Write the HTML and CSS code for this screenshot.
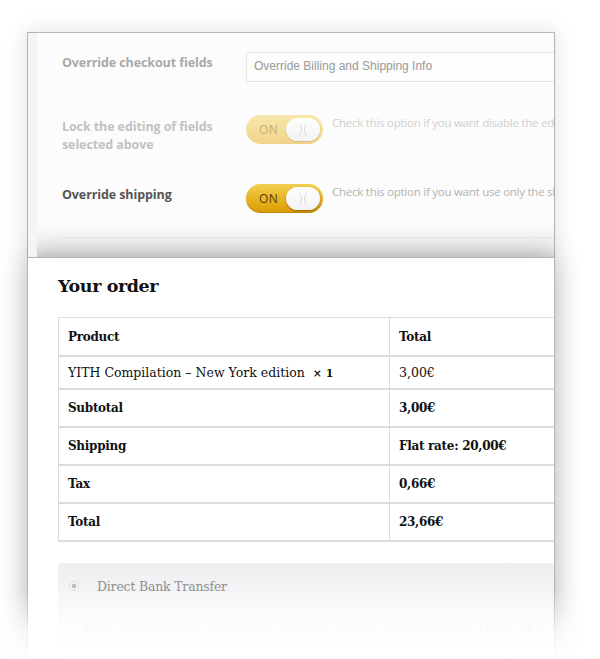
FILE: index.html
```html
<!DOCTYPE html>
<html>
<head>
<meta charset="utf-8">
<link rel="stylesheet" href="styles.css">
</head>
<body>
<div class="stage">
  <div class="admin">
    <div class="sidebar"></div>
    <div class="admin-body">
      <div class="row row-fields">
        <div class="label">Override checkout fields</div>
        <div class="field"><div class="input">Override Billing and Shipping Info</div></div>
      </div>
      <div class="row row-lock">
        <div class="label">Lock the editing of fields selected above</div>
        <div class="field">
          <div class="toggle faded"><span class="on">ON</span><span class="knob"></span></div>
          <div class="desc">Check this option if you want disable the editing of the fields</div>
        </div>
      </div>
      <div class="row row-ship">
        <div class="label">Override shipping</div>
        <div class="field">
          <div class="toggle"><span class="on">ON</span><span class="knob"></span></div>
          <div class="desc">Check this option if you want use only the shipping address</div>
        </div>
      </div>
      <div class="sep"></div>
    </div>
  </div>
  <div class="order">
    <h2 class="title">Your order</h2>
    <table class="tbl">
      <tr class="r-head"><th class="c1">Product</th><th>Total</th></tr>
      <tr class="r-item"><td class="c1">YITH Compilation – New York edition&nbsp; <b>× 1</b></td><td>3,00€</td></tr>
      <tr><th class="c1">Subtotal</th><th>3,00€</th></tr>
      <tr><th class="c1">Shipping</th><th>Flat rate: 20,00€</th></tr>
      <tr><th class="c1">Tax</th><th>0,66€</th></tr>
      <tr><th class="c1">Total</th><th>23,66€</th></tr>
    </table>
    <div class="pay">
      <div class="method"><span class="radio"></span><span class="mname">Direct Bank Transfer</span></div>
      <div class="pdesc">Make your payment directly into our bank account. Please use your Order ID as the payment reference.</div>
    </div>
  </div>
  <div class="fade"></div>
</div>
</body>
</html>
```

FILE: styles.css
```css
html, body {
  margin: 0;
  padding: 0;
  background: #fff;
}
.stage {
  position: relative;
  width: 600px;
  height: 659px;
  overflow: hidden;
  background: #fff;
  padding-top: 32px;
  box-sizing: border-box;
}
.admin {
  margin-left: 27px;
  width: 528px;
  height: 225px;
  box-sizing: border-box;
  border: 1px solid #b4b4b4;
  border-bottom: none;
  display: flex;
  overflow: hidden;
  background: linear-gradient(#fcfcfc 0, #fcfcfc 188px, #f0f0f0 215px, #e6e6e6 225px);
  box-shadow: 0 0 22px rgba(0,0,0,0.13);
}
.sidebar {
  width: 9px;
  flex: none;
  background: #f4f4f4;
}
.admin-body {
  flex: 1;
  padding-left: 25px;
  font-family: "Open Sans", "DejaVu Sans", sans-serif;
}
.row {
  display: grid;
  grid-template-columns: 184px 1fr;
}
.label {
  font-size: 12.5px;
  font-weight: 700;
  line-height: 18px;
  color: #a9a9a9;
  letter-spacing: -0.1px;
}
.row-fields {
  margin-top: 19px;
  height: 30px;
  align-items: start;
}
.row-fields .label { padding-top: 2px; }
.input {
  height: 30px;
  width: 340px;
  box-sizing: border-box;
  border: 1px solid #e6e6e6;
  border-radius: 2px;
  background: #fdfdfd;
  font-family: "Liberation Sans", Arial, sans-serif;
  font-size: 12px;
  color: #9a9a9a;
  line-height: 27px;
  padding-left: 7px;
  white-space: nowrap;
}
.row-lock {
  margin-top: 33px;
}
.row-lock .label {
  color: #c2c2c2;
  width: 160px;
  padding-top: 3px;
}
.field {
  display: flex;
  align-items: flex-start;
  white-space: nowrap;
}
.toggle {
  position: relative;
  flex: none;
  width: 77px;
  height: 29px;
  border-radius: 15px;
  background: linear-gradient(#f3cf4e, #e0a50f 80%, #d89a08);
  box-shadow: inset 0 -1px 1px rgba(120,70,0,0.25);
  display: flex;
  align-items: center;
}
.toggle.faded {
  background: linear-gradient(#f8e7ab, #f1d48a);
  box-shadow: none;
}
.on {
  font-size: 12px;
  color: #5a3c00;
  margin-left: 13px;
  letter-spacing: 0.5px;
}
.toggle.faded .on { color: #c8ac70; }
.knob {
  position: absolute;
  right: 3px;
  top: 3px;
  width: 34px;
  height: 23px;
  border-radius: 12px;
  background: linear-gradient(#ffffff, #f2f2f2);
  box-shadow: 0 1px 2px rgba(0,0,0,0.35);
  overflow: hidden;
}
.toggle.faded .knob { box-shadow: 0 1px 2px rgba(0,0,0,0.12); }
.knob::before, .knob::after {
  content: "";
  position: absolute;
  top: 3px;
  width: 12px;
  height: 16px;
  border-radius: 50%;
  border: 1px solid transparent;
}
.knob::before { left: 2px; border-right-color: #dcdcdc; }
.knob::after { right: 2px; border-left-color: #dcdcdc; }
.desc {
  margin-left: 9px;
  font-size: 11.5px;
  letter-spacing: -0.25px;
  color: #cfcfcf;
  line-height: 14px;
  margin-top: 1px;
}
.row-ship {
  margin-top: 30px;
  align-items: start;
}
.row-ship .label {
  color: #555;
  padding-top: 2px;
}
.row-ship .desc { color: #b3b3b3; }
.sep {
  margin-top: 24px;
  height: 1px;
  background: #e4e4e4;
  margin-left: -1px;
}
.order {
  margin-left: 27px;
  width: 528px;
  height: 420px;
  box-sizing: border-box;
  border: 1px solid #b4b4b4;
  border-bottom: none;
  background: #fff;
  overflow: hidden;
  padding-left: 30px;
  box-shadow: 0 0 26px rgba(0,0,0,0.32);
  font-family: "DejaVu Serif", "Liberation Serif", serif;
  color: #111;
}
.title {
  margin: 16px 0 0 0;
  font-size: 17.5px;
  font-weight: 700;
  line-height: 24px;
  letter-spacing: -0.4px;
}
.tbl {
  margin-top: 19px;
  width: 540px;
  border-collapse: collapse;
  font-size: 12.5px;
}
.tbl th, .tbl td {
  border: 1px solid #dcdcdc;
  border-bottom-width: 2px;
  height: 36px;
  padding: 0 9px;
  text-align: left;
  white-space: nowrap;
}
.tbl .r-head th { border-top-width: 1px; height: 37px; }
.tbl .r-item td { height: 31px; }
.tbl th { font-weight: 700; font-size: 12px; letter-spacing: -0.3px; }
.tbl td { font-weight: 400; }
.tbl .c1 { width: 312px; }
.tbl b { font-weight: 700; font-size: 11px; }
.pay {
  margin-top: 21px;
  height: 120px;
  background: linear-gradient(#efeef1, #f7f7f8 40%, #fff 90%);
  border-radius: 2px;
  padding-top: 13px;
  box-sizing: border-box;
}
.method {
  display: flex;
  align-items: center;
  height: 20px;
}
.radio {
  width: 8px;
  height: 8px;
  border-radius: 50%;
  border: 1px solid #e0e0e0;
  background: radial-gradient(circle, #bdbdbd 0, #bdbdbd 2px, #f4f4f4 2.5px);
  margin-left: 11px;
}
.mname {
  margin-left: 18px;
  font-size: 12.5px;
  letter-spacing: -0.2px;
  color: #8f8f8f;
}
.pdesc {
  margin-top: 26px;
  margin-left: 25px;
  font-size: 12px;
  letter-spacing: -0.3px;
  color: #ececec;
  white-space: nowrap;
}
.fade {
  position: absolute;
  left: 0;
  right: 0;
  bottom: 0;
  height: 70px;
  background: linear-gradient(rgba(255,255,255,0), rgba(255,255,255,0.75) 60%, #fff);
  pointer-events: none;
}
```
